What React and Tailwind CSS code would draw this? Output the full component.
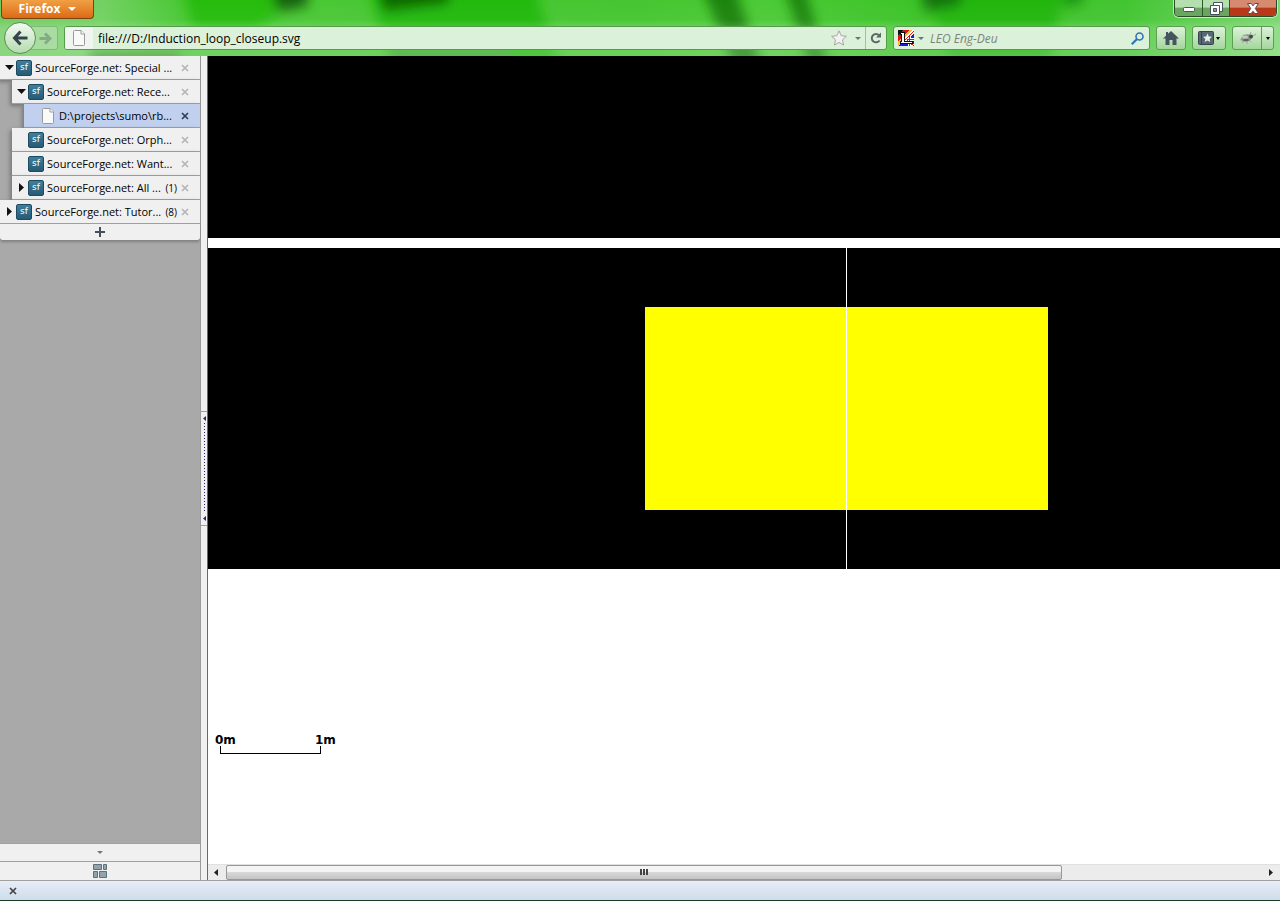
const UI = "font-['Open_Sans','Noto_Sans',sans-serif]";

function Backdrop() {
  return (
    <svg className="absolute inset-0 h-full w-full" viewBox="0 0 1280 56" preserveAspectRatio="none" aria-hidden="true">
      <defs>
        <linearGradient id="base" x1="0" x2="1" y1="0" y2="0">
          <stop offset="0" stopColor="#6fcb60" />
          <stop offset="0.08" stopColor="#72d162" />
          <stop offset="0.14" stopColor="#4cc838" />
          <stop offset="0.5" stopColor="#46c630" />
          <stop offset="0.6" stopColor="#4cca37" />
          <stop offset="0.72" stopColor="#3cc327" />
          <stop offset="0.88" stopColor="#43c532" />
          <stop offset="1" stopColor="#7bd670" />
        </linearGradient>
        <linearGradient id="glass" x1="0" x2="0" y1="0" y2="1">
          <stop offset="0" stopColor="#fff" stopOpacity="0" />
          <stop offset="0.35" stopColor="#fff" stopOpacity="0.03" />
          <stop offset="0.5" stopColor="#fff" stopOpacity="0.18" />
          <stop offset="1" stopColor="#fff" stopOpacity="0.2" />
        </linearGradient>
        <filter id="soft" filterUnits="userSpaceOnUse" x="-40" y="-60" width="1360" height="180"><feGaussianBlur stdDeviation="6" /></filter>
      </defs>
      <rect width="1280" height="56" fill="url(#base)" />
      <g filter="url(#soft)">
        <path d="M175-40h105l20 40-45 30h-62z" fill="#27bc11" />
        <path d="M262-40h44l2 46-30 6z" fill="#156409" />
        <path d="M360-40h165l40 120h-170z" fill="#23b90f" />
        <path d="M368-40h90l-10 44-64 8z" fill="#0f6a06" />
        <path d="M690-40h36l40 120h-26z" fill="#1c840f" />
        <path d="M775-40h22l35 120h-18z" fill="#1b880e" />
        <path d="M915-40h155l-20 100h-100z" fill="#22b60e" />
        <path d="M915-40h58l-14 46-34 6z" fill="#147609" />
        <path d="M1060-40h32l-10 44-18 4z" fill="#1b9a10" />
        <path d="M90 50h90v20H90zM390 50h120v20H390z" fill="#3f9f30" />
      </g>
      <rect width="1280" height="56" fill="url(#glass)" />
    </svg>
  );
}

function Caret({ className = "", dir = "down", w = 6, h = 4 }) {
  const d = dir === "down" ? "M0 0h6L3 4z" : dir === "right" ? "M0 0l6 2-6 2z" : "M6 0L0 2l6 2z";
  return (
    <svg className={className} width={w} height={h} viewBox="0 0 6 4" preserveAspectRatio="none" aria-hidden="true">
      <path d={d} fill="currentColor" />
    </svg>
  );
}

function PageIcon() {
  return (
    <svg width="12" height="16" viewBox="0 0 12 16" className="shrink-0" aria-hidden="true">
      <path d="M.5 1.5q0-1 1-1H8L11.500 4v10.500q0 1-1 1h-9q-1 0-1-1z" fill="#fafafa" stroke="#999" />
      <path d="M8 .5V4h3.500" fill="#fff" stroke="#999" />
    </svg>
  );
}

function Cross({ size = 8, color = "#b5b5b5" }) {
  return (
    <svg width={size} height={size} viewBox="0 0 8 8" aria-hidden="true">
      <path d="M1 1l6 6M7 1L1 7" stroke={color} strokeWidth="1.700" />
    </svg>
  );
}

const winBtn = "flex h-4 items-center justify-center border-r border-[#2b5a26] bg-linear-to-b from-[#b5dfae] from-45% to-[#6aa661] to-50%";
const toolBtn = "flex h-6 items-center justify-center rounded-[3px] border border-[#5d9d54] bg-linear-to-b from-[#dcf2d8] to-[#a3d69b]";

function TitleBar() {
  return (
    <div className="flex h-[26px] items-start justify-between pl-px">
      <button className="flex h-[19px] w-[93px] items-center justify-center gap-2 rounded-b-[4px] border border-t-0 border-[#7b4310] bg-linear-to-b from-[#f0a044] to-[#dc6a12] pb-px text-[12px] font-bold text-white">
        Firefox
        <Caret w={8} h={4} />
      </button>
      <div className="mr-[3px] flex overflow-hidden rounded-b-[5px] border border-t-0 border-[#2b4a26] shadow-[0_0_0_1px_#c5ecbf]">
        <button aria-label="Minimize" className={`${winBtn} w-7 pt-1`}>
          <svg width="14" height="6" viewBox="0 0 14 6"><rect x="1.500" y=".5" width="11" height="4" rx="1" fill="#fff" stroke="#49515e" /></svg>
        </button>
        <button aria-label="Restore" className={`${winBtn} w-[27px]`}>
          <svg width="13" height="13" viewBox="0 0 13 13" fill="#fff" stroke="#49515e">
            <path d="M3.500.5h9v9h-9z" />
            <path d="M.5 3.500h9v9h-9z" />
            <path d="M3.500 6.500h3v3h-3z" fill="#7fae77" />
          </svg>
        </button>
        <button aria-label="Close" className="flex h-4 w-[46px] items-center justify-center bg-linear-to-b from-[#d68a70] from-45% to-[#b8391a] to-50%">
          <svg width="12" height="11" viewBox="0 0 12 11">
            <path d="M.5.5h3.700L6 2.800 7.800.5h3.700L8.300 5.500l3.200 5H7.800L6 8.200l-1.800 2.300H.5l3.200-5z" fill="#fff" stroke="#5b4a52" />
          </svg>
        </button>
      </div>
    </div>
  );
}

function NavBar() {
  return (
    <div className="flex h-[30px] items-start pr-[6px] pl-1">
      <div className="flex items-center">
        <button aria-label="Back" className="z-10 -mt-1 flex size-8 items-center justify-center rounded-full border border-[#5c8f55] bg-linear-to-b from-[#f3faf2] to-[#b4dcae]">
          <svg width="16" height="16" viewBox="0 0 16 16" fill="none" stroke="#37424f" strokeWidth="3"><path d="M8.500 1.500L2.500 8l6 6.500M3 8h12.500" /></svg>
        </button>
        <button aria-label="Forward" disabled className="-mt-1 -ml-2 flex h-6 w-[30px] items-center justify-center rounded-r-[3px] border border-[#7fba77] bg-[#a8dca0] pl-1">
          <svg width="13" height="13" viewBox="0 0 13 13" fill="none" stroke="#86aa88" strokeWidth="3"><path d="M6 1.500l5 5-5 5M10.500 6.500H.5" /></svg>
        </button>
      </div>
      <div className="ml-[6px] flex h-6 min-w-0 flex-1 items-stretch rounded-[3px] border border-[#569a4c] bg-[#dcf1d9]">
        <span className="flex w-7 shrink-0 items-center justify-center rounded-l-[2px] bg-[#f0f5ef]"><PageIcon /></span>
        <input aria-label="Address" defaultValue="file:///D:/Induction_loop_closeup.svg" className="min-w-0 flex-1 bg-transparent px-[5px] pt-[2px] text-[12px] text-black outline-none" />
        <button aria-label="Bookmark this page" className="flex items-center px-1">
          <svg width="16" height="16" viewBox="0 0 16 16"><path d="M8 .8l2.200 4.900 5.200.6-3.900 3.500 1.100 5.300L8 12.400l-4.600 2.700 1.100-5.300L.6 6.300l5.200-.6z" fill="#f2f2f2" stroke="#a3a8a3" /></svg>
        </button>
        <button aria-label="Show history" className="flex items-center px-1 text-[#6b786b]"><Caret h={3} /></button>
        <button aria-label="Reload" className="flex w-[21px] items-center justify-center border-l border-[#9cc496]">
          <svg width="12" height="12" viewBox="0 0 12 12" fill="none" stroke="#5c6766" strokeWidth="2"><path d="M9 3.200A4.200 4.200 0 1 0 9.500 8.500" /><path d="M11 .5v5H6z" fill="#5c6766" stroke="none" /></svg>
        </button>
      </div>
      <div className="ml-[6px] flex h-6 w-[257px] items-center rounded-[3px] border border-[#569a4c] bg-[#dcf1d9] pl-1">
        <button aria-label="Search engine" className="flex items-center gap-1 text-[#6b786b]">
          <svg width="16" height="16" viewBox="0 0 16 16" shapeRendering="crispEdges">
            <rect width="16" height="16" fill="#fbc31c" />
            <path d="M0 0h11L0 11z" fill="#e01010" />
            <path d="M0 0h5L0 5z" fill="#111" />
            <path d="M16 0v16H0z" fill="#1a1ae0" />
            <path d="M16 1L4 13M16 9H9M11 16V6M7 9l9 7" stroke="#fff" strokeWidth="3" />
            <path d="M16 1L4 13M16 9H9M11 16V6M9 10l7 6" stroke="#e01010" />
            <path d="M2.500 2.500H6v8.500h8v2H2.500v-2h1V4h-1z" fill="#fff" stroke="#111" />
          </svg>
          <Caret h={3} />
        </button>
        <input aria-label="Search" placeholder="LEO Eng-Deu" className="min-w-0 flex-1 bg-transparent px-[6px] pt-[2px] text-[12px] italic outline-none placeholder:text-[#7b857a]" />
        <button aria-label="Go" className="pr-[5px]">
          <svg width="13" height="13" viewBox="0 0 13 13" fill="none" stroke="#2f74bb"><circle cx="8.500" cy="4.500" r="3.500" strokeWidth="1.600" /><path d="M6 7L.8 12.200" strokeWidth="2.200" /></svg>
        </button>
      </div>
      <button aria-label="Home" className={`${toolBtn} ml-[6px] w-[30px]`}>
        <svg width="16" height="14" viewBox="0 0 16 14" fill="#46545f"><path d="M8 0l8 7.500h-2.500V14H9.500V9h-3v5h-4V7.500H0L3 4.700V1h2v1.800z" /></svg>
      </button>
      <button aria-label="Bookmarks" className={`${toolBtn} ml-[6px] w-[34px] gap-[2px] text-black`}>
        <svg width="16" height="14" viewBox="0 0 16 14"><rect x=".5" y=".5" width="15" height="13" rx="1" fill="#586873" stroke="#36434e" /><path d="M3.500 1v12" stroke="#36434e" /><path d="M9.500 2.500l1.300 3 3.200.3-2.400 2.100.7 3.200-2.800-1.700-2.800 1.700.7-3.200L5 5.800l3.200-.3z" fill="#e4f2e3" /></svg>
        <Caret w={4} h={3} />
      </button>
      <div className="ml-[6px] flex">
        <button aria-label="Firebug" className={`${toolBtn} w-[30px] rounded-r-none`}>
          <svg width="18" height="14" viewBox="0 0 18 14"><path d="M2 9l3-1M4 12l2-3M9 13l0-3M13 11l-2-2M15 5l3-2M12 3l1-2M5 4l3 1" stroke="#9aa69a" /><ellipse cx="8.500" cy="7" rx="5.500" ry="3.600" transform="rotate(-15 8.500 7)" fill="#8d948d" /><ellipse cx="7" cy="6" rx="3" ry="1.600" fill="#c3cac3" /><ellipse cx="8" cy="9" rx="3" ry="1" fill="#5b605b" /><circle cx="13" cy="5.500" r="2" fill="#454a45" /></svg>
        </button>
        <button aria-label="Firebug options" className={`${toolBtn} -ml-px w-[13px] rounded-l-none text-black`}><Caret w={4} h={3} /></button>
      </div>
    </div>
  );
}

const tabs = [
  { title: "SourceForge.net: Special ...", level: 0, twisty: "down" },
  { title: "SourceForge.net: Rece...", level: 1, twisty: "down" },
  { title: "D:\\projects\\sumo\\rb...", level: 2, page: true, active: true },
  { title: "SourceForge.net: Orph...", level: 1 },
  { title: "SourceForge.net: Want...", level: 1 },
  { title: "SourceForge.net: All ...", level: 1, twisty: "right", count: "(1)" },
  { title: "SourceForge.net: Tutor...", level: 0, twisty: "right", count: "(8)" },
];
const indent = ["", "ml-3", "ml-6"];

function Tab({ tab }) {
  return (
    <li className={`flex h-6 items-center border-b border-[#a0a0a0] pr-[11px] shadow-[-2px_2px_4px_#777] ${indent[tab.level]} ${tab.active ? "bg-[#c1d0ee]" : "bg-[#f0f0f0]"}`}>
      <span className="flex w-4 shrink-0 items-center justify-center pl-[2px] text-[#111]">
        {tab.twisty === "down" && <Caret w={9} h={5} />}
        {tab.twisty === "right" && <Caret dir="right" w={5} h={9} />}
      </span>
      {tab.page ? (
        <span className="flex w-4 shrink-0 justify-center"><PageIcon /></span>
      ) : (
        <span className="flex size-4 shrink-0 items-center justify-center rounded-[2px] border border-[#1d4a60] bg-linear-to-b from-[#3f7f9c] to-[#255a75] font-['DejaVu_Sans',sans-serif] text-[9px] leading-none text-white">sf</span>
      )}
      <button className="min-w-0 flex-1 pt-[2px] pl-[3px] text-left text-[11px] whitespace-nowrap text-black">{tab.title}</button>
      {tab.count && <span className="pt-[2px] pr-1 text-[10px]">{tab.count}</span>}
      <button aria-label="Close tab" className="shrink-0"><Cross color={tab.active ? "#343d52" : "#b5b5b5"} /></button>
    </li>
  );
}

function Sidebar() {
  return (
    <aside className="flex w-[201px] shrink-0 flex-col border-r border-[#9a9a9a] bg-[#a9a9a9]">
      <ul>{tabs.map((t) => <Tab key={t.title} tab={t} />)}</ul>
      <button aria-label="New tab" className="flex h-4 items-center justify-center rounded-b-[3px] bg-[#f0f0f0] shadow-[0_2px_3px_#808080]">
        <svg width="10" height="10" viewBox="0 0 10 10"><path d="M5 0v10M0 5h10" stroke="#45505a" strokeWidth="2" /></svg>
      </button>
      <div className="flex-1" />
      <button aria-label="List all tabs" className="flex h-[18px] items-center justify-center border-t border-[#a0a0a0] bg-[#f0f0f0] text-[#777]"><Caret w={6} h={3} /></button>
      <button aria-label="Tab groups" className="flex h-[19px] items-center justify-center border-t border-[#a0a0a0] bg-[#f0f0f0]">
        <svg width="14" height="14" viewBox="0 0 14 14" fill="#93a3ab" stroke="#5e707a"><path d="M.5.5h8v5h-8zM10.500.5h3v5h-3zM.5 7.500h4v6h-4zM6.500 7.500h7v6h-7z" /></svg>
      </button>
    </aside>
  );
}

function Splitter() {
  return (
    <div className="flex w-[7px] shrink-0 flex-col items-center justify-center border-r border-[#696969] bg-[#f0f0f0]">
      <button aria-label="Collapse sidebar" className="flex h-[115px] w-full flex-col items-center justify-between border-y border-[#a0a0a0] py-1 text-[#28286e]">
        <Caret dir="left" w={3} h={5} />
        <svg width="1" height="90" viewBox="0 0 1 90" shapeRendering="crispEdges" aria-hidden="true">
          <path d="M.5 0v90" stroke="currentColor" strokeDasharray="1 2" />
        </svg>
        <Caret dir="left" w={3} h={5} />
      </button>
    </div>
  );
}

function Document() {
  return (
    <div className="min-h-0 flex-1 overflow-hidden bg-white">
      <svg width="1350" height="800" viewBox="0 0 1350 800" role="img" aria-label="Induction loop closeup" shapeRendering="crispEdges">
        <rect width="1350" height="182" />
        <rect y="192" width="1350" height="321" />
        <rect x="437" y="251" width="403" height="203" fill="#ff0" />
        <rect x="638" y="192" width="1" height="321" fill="#fff" />
        <path d="M12.500 690v7.500h100V690" fill="none" stroke="#000" />
        <g className="font-['DejaVu_Sans',sans-serif] text-[12px] font-bold">
          <text x="7" y="688">0m</text>
          <text x="107" y="688">1m</text>
        </g>
      </svg>
    </div>
  );
}

function ScrollBar() {
  return (
    <div className="flex h-4 border-t border-[#e0e0e0] bg-[#ececec] text-[#222]">
      <button aria-label="Scroll left" className="flex w-[18px] items-center justify-center pr-[2px]"><Caret dir="left" w={4} h={7} /></button>
      <div className="grid flex-1 grid-cols-[418fr_100fr]">
        <div className="flex items-center justify-center rounded-[2px] border border-[#979797] bg-linear-to-b from-[#f4f4f4] from-45% via-[#d8d8d8] via-50% to-[#c4c4c6] pb-px">
          <svg width="8" height="6" viewBox="0 0 8 6" shapeRendering="crispEdges" aria-hidden="true"><path d="M.5 0v6M3.500 0v6M6.500 0v6" stroke="#444" strokeWidth="2" /></svg>
        </div>
      </div>
      <button aria-label="Scroll right" className="flex w-[18px] items-center justify-center"><Caret dir="right" w={4} h={7} /></button>
    </div>
  );
}

export default function App() {
  return (
    <div className={`flex h-screen flex-col overflow-hidden text-black ${UI}`}>
      <header className="relative h-14 shrink-0">
        <Backdrop />
        <div className="relative">
          <TitleBar />
          <NavBar />
        </div>
      </header>
      <div className="flex min-h-0 flex-1">
        <Sidebar />
        <Splitter />
        <main className="flex min-w-0 flex-1 flex-col">
          <Document />
          <ScrollBar />
        </main>
      </div>
      <footer className="flex h-[21px] shrink-0 items-center border-t border-b border-t-[#a0a0a0] border-b-[#1c3c22] bg-linear-to-b from-[#e6edf7] to-[#cfdceb] pl-[9px]">
        <button aria-label="Close bar"><Cross color="#444" /></button>
      </footer>
    </div>
  );
}
